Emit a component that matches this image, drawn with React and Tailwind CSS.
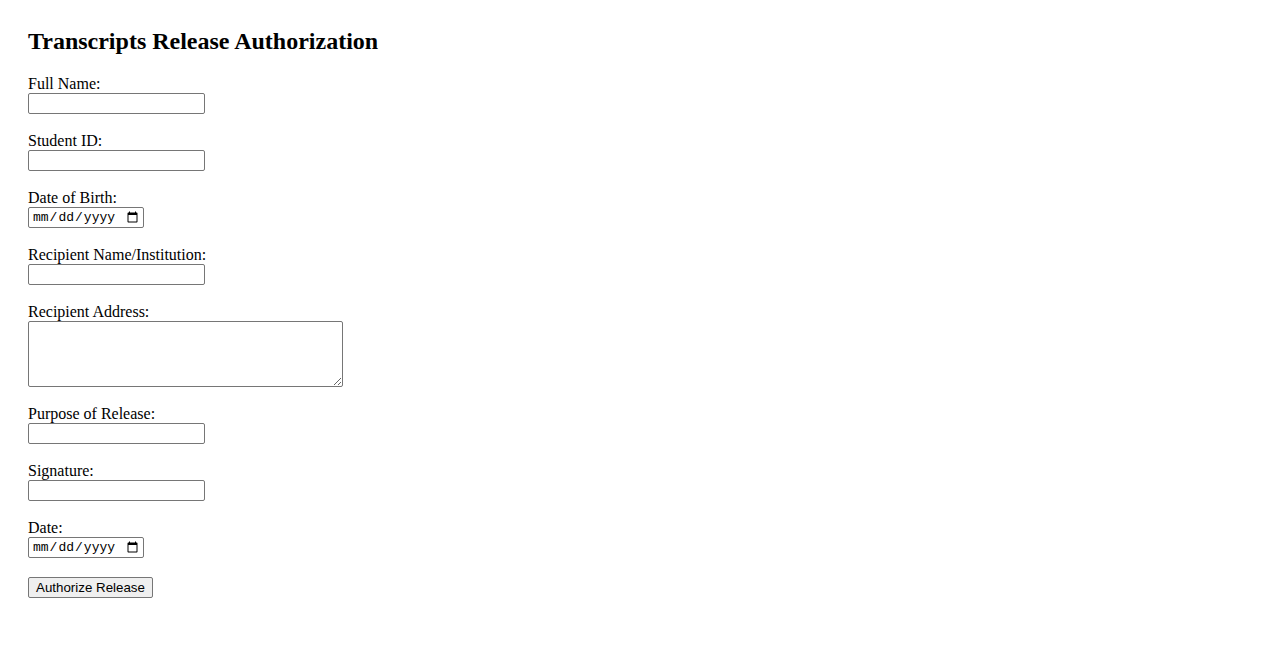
import React, { useState } from "react";

const inputCls = "block w-[177px] h-[21px] border border-[#767676] rounded-[2px] bg-white px-[2px] text-[13.33px] font-['Liberation_Sans',sans-serif] text-black outline-none";
const dateCls = "block w-[116px] h-[21px] border border-[#767676] rounded-[2px] bg-white pl-[3px] pr-[2px] text-[13px] font-['Liberation_Mono',monospace] text-black outline-none";

function Field({ label, children }) {
  return (
    <div className="mb-[19px]">
      <label className="block text-[16px] leading-[15px] mb-[2px]">{label}</label>
      {children}
    </div>
  );
}

export default function App() {
  const [form, setForm] = useState({});
  const set = k => e => setForm({ ...form, [k]: e.target.value });

  return (
    <div className="min-h-screen bg-white text-black font-['Liberation_Serif',serif] pt-[28px] px-[28px]">
      <h2 className="text-[24px] font-bold leading-[26px] mb-[22px]">Transcripts Release Authorization</h2>
      <form onSubmit={e => e.preventDefault()}>
        <Field label="Full Name:"><input type="text" value={form.name || ""} onChange={set("name")} className={inputCls} /></Field>
        <Field label="Student ID:"><input type="text" value={form.sid || ""} onChange={set("sid")} className={inputCls} /></Field>
        <Field label="Date of Birth:"><input type="date" value={form.dob || ""} onChange={set("dob")} className={dateCls} /></Field>
        <Field label="Recipient Name/Institution:"><input type="text" value={form.recipient || ""} onChange={set("recipient")} className={inputCls} /></Field>
        <Field label="Recipient Address:">
          <textarea value={form.address || ""} onChange={set("address")} className="block w-[315px] h-[66px] border border-[#767676] rounded-[2px] bg-white p-[2px] text-[13.33px] font-['Liberation_Mono',monospace] outline-none resize" />
        </Field>
        <Field label="Purpose of Release:"><input type="text" value={form.purpose || ""} onChange={set("purpose")} className={inputCls} /></Field>
        <Field label="Signature:"><input type="text" value={form.signature || ""} onChange={set("signature")} className={inputCls} /></Field>
        <Field label="Date:"><input type="date" value={form.date || ""} onChange={set("date")} className={dateCls} /></Field>
        <button type="submit" className="block h-[21px] w-[125px] border border-[#767676] rounded-[2px] bg-[#efefef] text-[13.33px] leading-[17px] font-['Liberation_Sans',sans-serif] text-black">Authorize Release</button>
      </form>
    </div>
  );
}
